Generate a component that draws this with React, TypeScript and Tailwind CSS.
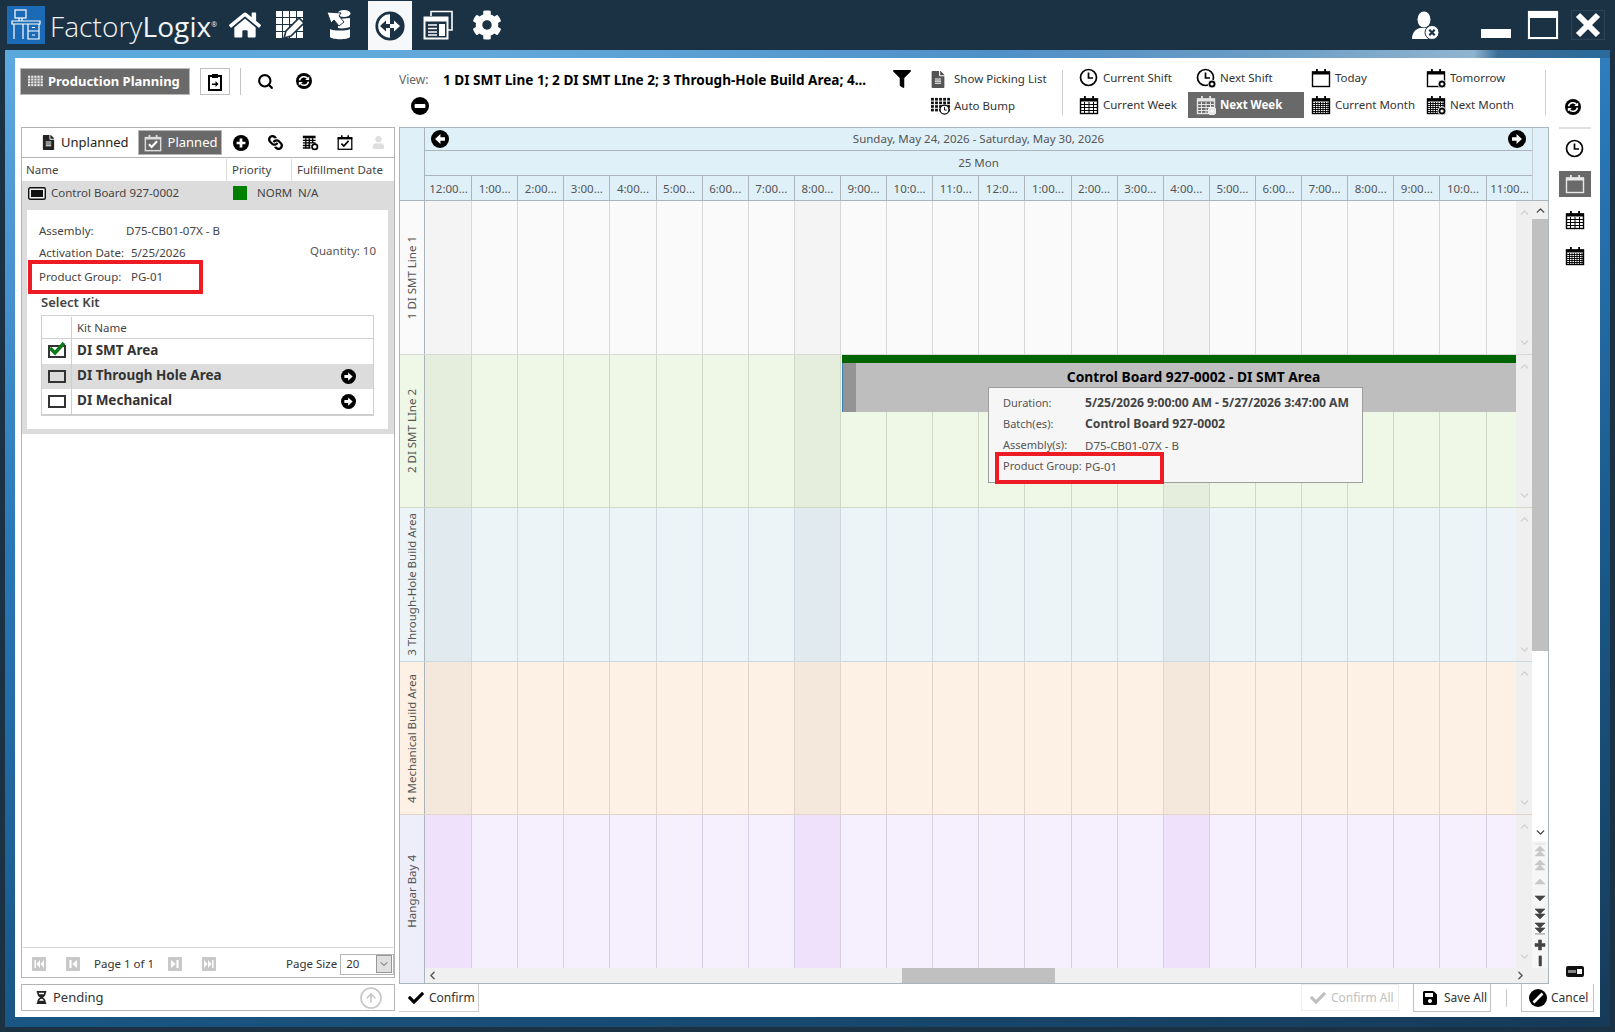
import React from 'react';
import { FaHome, FaCog, FaFilter, FaLink, FaUser, FaFileAlt, FaCheck, FaSave, FaHourglassHalf } from 'react-icons/fa';
import { ArrowUpCircle, ChevronDown, ChevronLeft, ChevronRight, ChevronUp, Search } from 'lucide-react';

const hours = ['12:00...', '1:00...', '2:00...', '3:00...', '4:00...', '5:00...', '6:00...', '7:00...', '8:00...', '9:00...', '10:0...', '11:0...', '12:0...', '1:00...', '2:00...', '3:00...', '4:00...', '5:00...', '6:00...', '7:00...', '8:00...', '9:00...', '10:0...', '11:00...'];

const lanes = [
  { name: '1 DI SMT Line 1', label: 'bg-[#fafafa]', cell: 'bg-[#fafafa]', shade: 'bg-[#f4f4f4]', line: 'border-[#d8d8d8]' },
  { name: '2 DI SMT LIne 2', label: 'bg-[#eff8e6]', cell: 'bg-[#eff8e6]', shade: 'bg-[#e5eedc]', line: 'border-[#cfd9c6]' },
  { name: '3 Through-Hole Build Area', label: 'bg-[#ecf4f8]', cell: 'bg-[#ecf4f8]', shade: 'bg-[#e1eaee]', line: 'border-[#cdd8df]' },
  { name: '4 Mechanical Build Area', label: 'bg-[#fdf0e4]', cell: 'bg-[#fdf0e4]', shade: 'bg-[#f4e7db]', line: 'border-[#e2d5c8]' },
  { name: 'Hangar Bay 4', label: 'bg-[#eeeefa]', cell: 'bg-[#f6f0fe]', shade: 'bg-[#efe1fb]', line: 'border-[#d8cfe4]' },
];

const CircleArrow = ({ dir, size = 18 }: { dir: 'left' | 'right'; size?: number }) => (
  <svg width={size} height={size} viewBox="0 0 20 20">
    <circle cx="10" cy="10" r="10" fill="#000" />
    {dir === 'right' ? (
      <polygon points="4.5,8 9.5,8 9.5,4.5 15.5,10 9.5,15.5 9.5,12 4.5,12" fill="#fff" />
    ) : (
      <polygon points="15.5,8 10.5,8 10.5,4.5 4.5,10 10.5,15.5 10.5,12 15.5,12" fill="#fff" />
    )}
  </svg>
);

const CirclePlus = () => (
  <svg width="16" height="16" viewBox="0 0 20 20">
    <circle cx="10" cy="10" r="10" fill="#000" />
    <path d="M10 4.5v11M4.5 10h11" stroke="#fff" strokeWidth="3.4" />
  </svg>
);

const CircleMinus = () => (
  <svg width="18" height="18" viewBox="0 0 20 20">
    <circle cx="10" cy="10" r="10" fill="#000" />
    <rect x="4" y="7.8" width="12" height="4.4" rx="1" fill="#fff" />
  </svg>
);

const Refresh = () => (
  <svg width="16" height="16" viewBox="0 0 20 20">
    <circle cx="10" cy="10" r="10" fill="#000" />
    <path d="M4.4 9.2A5.7 5.7 0 0 1 14.6 7" stroke="#fff" strokeWidth="2" fill="none" />
    <path d="M15.6 10.8A5.7 5.7 0 0 1 5.4 13" stroke="#fff" strokeWidth="2" fill="none" />
    <polygon points="11.5,8.8 16.5,8.8 16.5,4.5" fill="#fff" />
    <polygon points="8.5,11.2 3.5,11.2 3.5,15.5" fill="#fff" />
  </svg>
);

const Badge = ({ color = '#000' }: { color?: string }) => (
  <>
    <circle cx="16" cy="16" r="4" fill={color} stroke="#fff" strokeWidth="0.8" />
    <circle cx="16" cy="16" r="1.6" fill="#fff" />
  </>
);

const ClockIcon = ({ badge }: { badge?: boolean }) => (
  <svg width="20" height="20" viewBox="0 0 20 20" className="text-black">
    <circle cx="9.5" cy="9.5" r="8" stroke="currentColor" strokeWidth="1.7" fill="none" />
    <path d="M9.5 4.5v5.5h4.5" stroke="currentColor" strokeWidth="1.7" fill="none" />
    {badge && <Badge />}
  </svg>
);

const CalIcon = ({ grid, dense, badge, className }: { grid?: boolean; dense?: boolean; badge?: boolean; className?: string }) => (
  <svg width="20" height="20" viewBox="0 0 20 20" className={className ?? 'text-black'}>
    <rect x="1.5" y="4" width="17" height="14.5" stroke="currentColor" strokeWidth="1.4" fill="none" />
    <rect x="1" y="3.5" width="18" height="3" fill="currentColor" />
    <rect x="5" y="1" width="1.8" height="4" fill="currentColor" />
    <rect x="13.2" y="1" width="1.8" height="4" fill="currentColor" />
    {grid && <path d="M2 9.5h16M2 12.5h16M2 15.5h16M5.5 7v11M10 7v11M14.5 7v11" stroke="currentColor" strokeWidth="1" />}
    {dense && <path d="M2 8.5h16M2 10.5h16M2 12.5h16M2 14.5h16M2 16.5h16M4.5 7v11M7 7v11M9.5 7v11M12 7v11M14.5 7v11M17 7v11" stroke="currentColor" strokeWidth="0.9" />}
    {badge && <Badge color="currentColor" />}
  </svg>
);

const CalCheck = () => (
  <svg width="16" height="17" viewBox="0 0 20 20">
    <rect x="1.5" y="4" width="17" height="14.5" stroke="#000" strokeWidth="1.6" fill="none" />
    <rect x="1" y="3.5" width="18" height="2.6" fill="#000" />
    <rect x="5" y="1" width="2" height="4" fill="#000" />
    <rect x="13" y="1" width="2" height="4" fill="#000" />
    <path d="M5.5 11.5l3 3 6-6.5" stroke="#000" strokeWidth="2.2" fill="none" />
  </svg>
);

const CalCheckWhite = () => (
  <svg width="18" height="18" viewBox="0 0 20 20">
    <rect x="1.5" y="4" width="17" height="14.5" stroke="#ddd" strokeWidth="1.6" fill="none" />
    <rect x="1" y="3.5" width="18" height="2.6" fill="#ddd" />
    <rect x="5" y="1" width="2" height="4" fill="#ddd" />
    <rect x="13" y="1" width="2" height="4" fill="#ddd" />
    <path d="M5.5 11.5l3 3 6-6.5" stroke="#fff" strokeWidth="2.4" fill="none" />
  </svg>
);

const TableGear = () => (
  <svg width="17" height="17" viewBox="0 0 20 20">
    <rect x="1" y="2" width="15" height="3" fill="#000" />
    <path d="M1 7.5h15M1 10.5h15M1 13.5h9M1 16.5h9M4.5 5v12M8.5 5v12M12.5 5v5" stroke="#000" strokeWidth="1.6" />
    <circle cx="15" cy="15" r="3.2" fill="none" stroke="#000" strokeWidth="2" />
  </svg>
);

const GridSmall = ({ color, badge, width = 20 }: { color: string; badge?: boolean; width?: number }) => (
  <svg width={width} height={Math.round(width * 0.9)} viewBox="0 0 22 20">
    {[1, 5, 9, 13].map((y) =>
      [1, 5.5, 10, 14.5, 19].map((x) => <rect key={`${x}-${y}`} x={x} y={y} width="3.2" height="3" fill={color} />)
    )}
    {badge && (
      <>
        <circle cx="16" cy="14" r="5" fill="#fff" stroke="#000" strokeWidth="1.3" />
        <path d="M16 11v3.5h2.5" stroke="#000" strokeWidth="1" fill="none" />
      </>
    )}
  </svg>
);

const PagerIcon = ({ kind }: { kind: 'first' | 'prev' | 'next' | 'last' }) => (
  <svg width="14" height="14" viewBox="0 0 14 14" className="rounded-[1px] bg-[#c8c8c8]">
    {kind === 'first' && <path d="M2.5 3h1.4v8H2.5zM8 3v8L4.5 7zM12 3v8L8.5 7z" fill="#fff" />}
    {kind === 'prev' && <path d="M3.5 3h2v8h-2zM11 3v8L6.5 7z" fill="#fff" />}
    {kind === 'next' && <path d="M8.5 3h2v8h-2zM3 3v8l4.5-4z" fill="#fff" />}
    {kind === 'last' && <path d="M10.1 3h1.4v8h-1.4zM2 3v8l3.5-4zM6 3v8l3.5-4z" fill="#fff" />}
  </svg>
);

const Logo = () => (
  <div className="flex h-[38px] w-[38px] items-center justify-center bg-[#1b6ab5]">
    <svg width="30" height="32" viewBox="0 0 30 32" fill="none" stroke="#fff" strokeWidth="1.2">
      <rect x="4" y="1" width="11" height="8" />
      <path d="M8 9v3M11 9v3M1 12h28v3H1zM3 15v15M12 15v15M17 15v15h11V15M17 22h11" />
      <path d="M21 18.5h3M21 26h3" />
    </svg>
  </div>
);

const GridEdit = () => (
  <svg width="30" height="30" viewBox="0 0 30 30">
    {[1, 8, 15, 22].map((y) =>
      [1, 8, 15, 22].map((x) => <rect key={`${x}-${y}`} x={x} y={y} width="6" height="6" fill="#fff" />)
    )}
    <path d="M9 28l2-7L24 8l5 5-13 13z" fill="#fff" stroke="#1b3245" strokeWidth="1.6" />
  </svg>
);

const DbIcon = () => (
  <svg width="26" height="32" viewBox="0 0 26 32">
    <path d="M3 20c3 2 17 2 20 0v8c-2 3-18 3-20 0z" fill="#fff" />
    <path d="M11 10l12-1v9c-3 1-8 2-12 1z" fill="#fff" />
    <ellipse cx="17" cy="4.5" rx="6.5" ry="3.5" fill="#fff" />
    <path d="M0 3l14 1-2 3 5 6-5 4-5-6-3 3z" fill="#fff" stroke="#1b3245" strokeWidth="1" />
  </svg>
);

const SwitchIcon = () => (
  <svg width="30" height="30" viewBox="0 0 30 30">
    <circle cx="15" cy="15" r="13.2" fill="#fff" stroke="#1b3245" strokeWidth="2.8" />
    <path d="M15 2a13 13 0 0 1 0 26z" fill="#1b3245" />
    <polygon points="5,15 11,9.5 11,13 15,13 15,17 11,17 11,20.5" fill="#1b3245" />
    <polygon points="25,15 19,9.5 19,13 15,13 15,17 19,17 19,20.5" fill="#fff" />
  </svg>
);

const WindowsIcon = () => (
  <svg width="30" height="30" viewBox="0 0 30 30" fill="none" stroke="#fff">
    <path d="M8 6V1.5h21V20h-4" strokeWidth="1.6" />
    <rect x="1.5" y="7.5" width="23" height="21" strokeWidth="2" />
    <rect x="2" y="8" width="22" height="3.5" fill="#fff" stroke="none" />
    <path d="M5 15h9M5 18.5h9M5 22h9M5 25h9" strokeWidth="1.7" />
    <rect x="16" y="14" width="6" height="12" fill="#fff" stroke="none" />
  </svg>
);

const UserOff = () => (
  <svg width="28" height="29" viewBox="0 0 28 29">
    <ellipse cx="12" cy="8.5" rx="6.5" ry="8" fill="#fff" />
    <path d="M0 28c0-7 4-10 8-11h8c4 1 8 4 8 11z" fill="#fff" />
    <circle cx="20" cy="21.5" r="7" fill="#fff" stroke="#1b3245" strokeWidth="1" />
    <path d="M17.3 18.8l5.4 5.4M22.7 18.8l-5.4 5.4" stroke="#1b3245" strokeWidth="2.2" />
  </svg>
);

const TimeButton = ({ icon, label, active, w, pad = 'pl-[10px]' }: { icon: React.ReactNode; label: string; active?: boolean; w: string; pad?: string }) => (
  <div className={`flex h-[26px] items-center gap-[4px] text-[11.5px] ${pad} ${w} ${active ? 'bg-[#696969] font-bold text-white' : 'text-[#333]'}`}>
    <span className="flex w-[20px] shrink-0 justify-center">{icon}</span>
    <span className="whitespace-nowrap">{label}</span>
  </div>
);

const Toolbar = () => (
  <div className="flex h-[69px] shrink-0">
    <div className="flex w-[384px] shrink-0 items-start pl-[5px] pt-[10px]">
      <div className="flex h-[27px] w-[170px] items-center gap-[5px] border border-[#b8b8b8] bg-[#6a6a6a] pl-[6px] text-[13px] font-bold text-white">
        <GridSmall color="#e8e8e8" width={16} />
        <span className="whitespace-nowrap">Production Planning</span>
      </div>
      <div className="ml-[10px] flex h-[27px] w-[30px] items-center justify-center border border-[#c0c0c0]">
        <svg width="14" height="18" viewBox="0 0 14 18">
          <path d="M1 3h12v14H1z" fill="#fff" stroke="#000" strokeWidth="2" />
          <rect x="4" y="1" width="6" height="4" fill="#000" />
          <path d="M4 10.5h3.5V8l3 3-3 3v-2H4z" fill="#000" />
        </svg>
      </div>
      <div className="ml-[10px] h-[27px] w-px bg-[#c4c4c4]" />
      <Search size={17} strokeWidth={3} className="ml-[16px] mt-[5px] text-black" />
      <div className="ml-[22px] mt-[5px]">
        <Refresh />
      </div>
    </div>
    <div className="relative my-[12px] flex w-[664px] shrink-0 border-r border-[#cfcfcf]">
      <div className="w-[500px] shrink-0">
        <div className="flex h-[20px] items-center">
          <span className="w-[44px] text-[12px] text-[#666]">View:</span>
          <span className="whitespace-nowrap text-[13.6px] font-bold text-black">1 DI SMT Line 1; 2 DI SMT LIne 2; 3 Through-Hole Build Area; 4...</span>
        </div>
        <div className="ml-[12px] mt-[7px]">
          <CircleMinus />
        </div>
      </div>
      <div className="-mt-[1px] ml-[-6px] w-[28px] pt-[1px]">
        <FaFilter size={18} className="text-black" />
      </div>
      <div className="ml-[9px] flex flex-col gap-[8px] text-[11.5px] text-[#333]">
        <div className="flex h-[20px] items-center gap-[8px]">
          <FaFileAlt size={17} className="w-[16px] text-[#555]" />
          <span className="whitespace-nowrap">Show Picking List</span>
        </div>
        <div className="mt-px flex h-[20px] items-center gap-[4px]">
          <GridSmall color="#111" badge />
          <span className="whitespace-nowrap">Auto Bump</span>
        </div>
      </div>
    </div>
    <div className="ml-[6px] mt-[7px] grid h-[53px] w-[470px] shrink-0 grid-cols-[119px_116px_112px_123px] grid-rows-2">
      <TimeButton w="w-[119px]" icon={<ClockIcon />} label="Current Shift" />
      <TimeButton w="w-[116px]" pad="pl-[8px]" icon={<ClockIcon badge />} label="Next Shift" />
      <TimeButton w="w-[112px]" pad="pl-[7px]" icon={<CalIcon />} label="Today" />
      <TimeButton w="w-[123px]" icon={<CalIcon badge />} label="Tomorrow" />
      <TimeButton w="w-[119px]" icon={<CalIcon grid />} label="Current Week" />
      <TimeButton w="w-[116px]" pad="pl-[8px]" active icon={<CalIcon grid badge className="text-[#e4e4e4]" />} label="Next Week" />
      <TimeButton w="w-[112px]" pad="pl-[7px]" icon={<CalIcon dense />} label="Current Month" />
      <TimeButton w="w-[123px]" icon={<CalIcon dense badge />} label="Next Month" />
    </div>
    <div className="my-[12px] ml-[6px] w-px bg-[#d0d0d0]" />
    <div className="flex flex-1 justify-center pt-[41px]">
      <Refresh />
    </div>
  </div>
);

const LeftPanel = () => (
  <div className="flex h-[851px] w-[374px] shrink-0 flex-col border border-[#b5b5b5] text-[#444]">
    <div className="flex h-[30px] shrink-0 items-center border-b border-[#b5b5b5]">
      <FaFileAlt size={15} className="ml-[19px] text-[#222]" />
      <span className="ml-[5px] text-[13px] text-[#222]">Unplanned</span>
      <div className="ml-[9px] flex h-[25px] w-[84px] items-center gap-[6px] border border-[#b5b5b5] bg-[#696969] pl-[5px] text-[13px] text-white">
        <CalCheckWhite />
        <span>Planned</span>
      </div>
      <div className="ml-[11px]"><CirclePlus /></div>
      <FaLink size={15} className="ml-[19px] rotate-90 text-black" />
      <div className="ml-[19px]"><TableGear /></div>
      <div className="ml-[18px]"><CalCheck /></div>
      <FaUser size={13} className="ml-[19px] text-[#dedede]" />
    </div>
    <div className="flex min-h-0 flex-1 flex-col">
      <div className="flex h-[23px] shrink-0 items-center pt-px text-[11.5px]">
        <div className="flex h-full w-[205px] items-center border-r border-[#dcdcdc] pl-[4px]">Name</div>
        <div className="flex h-full w-[65px] items-center border-r border-[#dcdcdc] pl-[5px]">Priority</div>
        <div className="pl-[5px]">Fulfillment Date</div>
      </div>
      <div className="flex h-[24px] shrink-0 items-center bg-[#dcdcdc] text-[11.5px]">
        <svg width="18" height="13" viewBox="0 0 18 13" className="ml-[6px]">
          <rect x="0.7" y="0.7" width="16.6" height="11.6" rx="1.5" fill="#f4f4f4" stroke="#111" strokeWidth="1.4" />
          <rect x="3" y="3" width="12" height="7" fill="#111" />
        </svg>
        <span className="ml-[5px] w-[176px]">Control Board 927-0002</span>
        <div className="flex h-full w-[65px] items-center overflow-hidden pl-[6px]">
          <span className="h-[14px] w-[14px] shrink-0 bg-[#008000]" />
          <span className="ml-[10px] whitespace-nowrap">NORMAL</span>
        </div>
        <span className="pl-[6px]">N/A</span>
      </div>
      <div className="h-[229px] shrink-0 bg-[#dcdcdc] px-[5px] py-[5px]">
        <div className="relative h-[219px] w-[361px] bg-white pl-[12px] pt-[10px] text-[11.5px]">
          <div className="flex h-[21px] items-center">
            <span className="w-[87px]">Assembly:</span>
            <span>D75-CB01-07X - B</span>
          </div>
          <div className="flex h-[22px] items-center pt-px">
            <span className="w-[92px] whitespace-nowrap">Activation Date:</span>
            <span>5/25/2026</span>
            <span className="absolute right-[12px] top-[32px] text-[#555]">Quantity: 10</span>
          </div>
          <div className="relative mt-[3px] flex h-[22px] items-center">
            <span className="w-[92px] whitespace-nowrap">Product Group:</span>
            <span>PG-01</span>
            <div className="absolute left-[-11px] top-[-6px] h-[34px] w-[175px] border-4 border-[#ed1c24]" />
          </div>
          <div className="ml-[2px] mt-[5px] flex h-[18px] items-center pt-px text-[13px] font-semibold text-[#444]">Select Kit</div>
          <div className="ml-[2px] mt-[4px] w-[333px] border-x border-b-2 border-t border-[#cfcfcf]">
            <div className="flex h-[23px] items-center border-b border-[#cfcfcf] pt-px">
              <div className="h-full w-[30px] border-r border-[#cfcfcf]" />
              <span className="pl-[5px]">Kit Name</span>
            </div>
            {[
              { name: 'DI SMT Area', checked: true, grey: false },
              { name: 'DI Through Hole Area', checked: false, grey: true },
              { name: 'DI Mechanical', checked: false, grey: false },
            ].map((kit) => (
              <div key={kit.name} className={`flex h-[25px] items-center ${kit.grey ? 'bg-[#dcdcdc]' : ''}`}>
                <div className="relative flex h-full w-[30px] items-center justify-center border-r border-[#cfcfcf]">
                  <span className="h-[13px] w-[18px] border-2 border-[#333]" />
                  {kit.checked && (
                    <svg width="20" height="16" viewBox="0 0 20 16" className="absolute left-[5px] top-[2px]">
                      <path d="M3 7l5 5 9-10" fill="none" stroke="#0b7a1a" strokeWidth="3.6" />
                    </svg>
                  )}
                </div>
                <span className="mb-[2px] ml-[5px] flex-1 text-[13.5px] font-bold text-[#333]">{kit.name}</span>
                {kit.name !== 'DI SMT Area' && (
                  <div className="mr-[17px]"><CircleArrow dir="right" size={15} /></div>
                )}
              </div>
            ))}
          </div>
        </div>
      </div>
      <div className="flex-1" />
      <div className="mx-px h-px bg-[#d4d4d4]" />
    </div>
    <div className="flex h-[29px] shrink-0 items-center pt-[3px] text-[#333]">
      <div className="ml-[10px]"><PagerIcon kind="first" /></div>
      <div className="ml-[20px]"><PagerIcon kind="prev" /></div>
      <span className="ml-[14px] w-[60px] whitespace-nowrap text-[11.5px]">Page 1 of 1</span>
      <div className="ml-[14px]"><PagerIcon kind="next" /></div>
      <div className="ml-[20px]"><PagerIcon kind="last" /></div>
      <span className="ml-[70px] whitespace-nowrap text-[11.5px]">Page Size</span>
      <div className="ml-[3px] flex h-[21px] w-[54px] items-center border border-[#b5b5b5] pl-[5px] text-[11.5px]">
        <span className="flex-1">20</span>
        <div className="mr-px flex h-[18px] w-[16px] items-center justify-center border border-[#999] bg-[#e0e0e0]">
          <ChevronDown size={12} strokeWidth={2} className="text-[#555]" />
        </div>
      </div>
    </div>
  </div>
);

const GridHeader = () => (
  <div className="flex h-[73px] shrink-0 border-b border-[#aab4ba] bg-[#dff0f9] text-[#555]">
    <div className="w-[25px] shrink-0 border-r border-[#aab4ba]" />
    <div className="w-[1108px] shrink-0 border-r border-[#c4ced4]">
      <div className="relative flex h-[23px] items-center justify-center border-b border-[#aab4ba] text-[11.5px]">
        <div className="absolute left-[6px] top-[2px]"><CircleArrow dir="left" /></div>
        <span>Sunday, May 24, 2026 - Saturday, May 30, 2026</span>
        <div className="absolute right-[6px] top-[2px]"><CircleArrow dir="right" /></div>
      </div>
      <div className="flex h-[25px] items-center justify-center border-b border-[#aab4ba] text-[11.5px]">25 Mon</div>
      <div className="flex h-[24px] pl-px">
        {hours.map((h, i) => (
          <div key={i} className="flex h-full w-[46.12px] shrink-0 items-center justify-center border-r border-[#aab4ba] pt-px text-[11.5px] last:border-r-0">
            {h}
          </div>
        ))}
      </div>
    </div>
  </div>
);

const Lane = ({ lane, children }: { lane: (typeof lanes)[number]; children?: React.ReactNode }) => (
  <div className={`flex h-[153.6px] shrink-0 border-b ${lane.line}`}>
    <div className={`flex w-[25px] shrink-0 items-center justify-center border-r border-[#aab4ba] ${lane.label}`}>
      <span className="rotate-180 whitespace-nowrap text-[11.5px] text-[#555] [writing-mode:vertical-rl]">{lane.name}</span>
    </div>
    <div className={`relative flex w-[1091px] shrink-0 overflow-hidden pl-px ${lane.shade}`}>
      {hours.map((_, i) => (
        <div key={i} className={`h-full w-[46.12px] shrink-0 border-r ${lane.line} ${i % 8 === 0 ? lane.shade : lane.cell}`} />
      ))}
      {children}
    </div>
    <div className="flex w-[16px] shrink-0 flex-col items-center justify-between bg-[#efefef] py-[5px] text-[#cfcfcf]">
      <ChevronUp size={13} strokeWidth={2.4} />
      <ChevronDown size={13} strokeWidth={2.4} />
    </div>
  </div>
);

const ZoomControls = () => (
  <div className="flex h-[128px] w-full shrink-0 flex-col items-center bg-[#f6f6f6] pt-[1px]">
    {[
      { d: 'M2 1h10M7 3L2 8h10zM7 8l-5 5h10z', c: '#c8c8c8' },
      { d: 'M7 1L2 6h10zM7 6l-5 5h10z', c: '#c8c8c8' },
      { d: 'M7 4L2 9h10z', c: '#c8c8c8' },
      { d: 'M2 5h10L7 10z', c: '#444' },
      { d: 'M2 2h10L7 7zM2 7h10L7 12z', c: '#444' },
      { d: 'M2 1h10L7 6zM2 6h10l-5 5zM2 12h10', c: '#444' },
      { d: 'M5.5 2h3v3.5H12v3H8.5V12h-3V8.5H2v-3h3.5z', c: '#444' },
      { d: 'M6 2h2.5v10H6z', c: '#444' },
    ].map((item, i) => (
      <svg key={i} width="14" height="16" viewBox="0 0 14 14">
        <path d={item.d} fill={item.c} stroke={item.c} strokeWidth="0.6" />
      </svg>
    ))}
  </div>
);

const GanttBar = () => (
  <div className="absolute left-[417px] top-0 h-[58px] w-[700px]">
    <div className="h-[8px] bg-[#006400]" />
    <div className="flex h-[49px] bg-[#bebebe]">
      <div className="h-full w-[14px] border-l border-[#3a7fb5] bg-[#949494]" />
      <div className="w-[675px] pt-[4px] text-center text-[13.8px] font-bold text-black">Control Board 927-0002 - DI SMT Area</div>
    </div>
  </div>
);

const GridArea = () => (
  <div className="relative flex h-[857px] w-[1150px] shrink-0 flex-col border-x border-t border-[#aab4ba]">
    <GridHeader />
    <div className="flex min-h-0 flex-1">
      <div className="flex w-[1132px] shrink-0 flex-col">
        <Lane lane={lanes[0]} />
        <Lane lane={lanes[1]}><GanttBar /></Lane>
        <Lane lane={lanes[2]} />
        <Lane lane={lanes[3]} />
        <Lane lane={lanes[4]} />
      </div>
      <div className="flex h-[768px] w-[16px] shrink-0 flex-col items-center">
        <div className="flex h-[18px] w-full items-center justify-center bg-[#f0f0f0] text-[#444]">
          <ChevronUp size={13} strokeWidth={2.6} />
        </div>
        <div className="h-[432px] w-full shrink-0 bg-[#c0c0c0]" />
        <div className="flex flex-1 flex-col items-center justify-end bg-white pb-[2px] text-[#444]">
          <ChevronDown size={13} strokeWidth={2.6} />
        </div>
        <ZoomControls />
      </div>
    </div>
    <div className="flex h-[16px] shrink-0 border-b border-[#aab4ba]">
      <div className="w-[25px] shrink-0 border-r border-[#aab4ba] bg-[#eeeefa]" />
      <div className="relative flex flex-1 items-center justify-between bg-[#f0f0f0] px-[1px] text-[#555]">
        <ChevronLeft size={13} strokeWidth={2.6} />
        <div className="absolute left-[477px] top-0 h-full w-[153px] bg-[#c0c0c0]" />
        <ChevronRight size={13} strokeWidth={2.6} className="mr-[20px]" />
      </div>
    </div>
    <div className="absolute left-[588px] top-[259px] h-[96px] w-[375px] border border-[#9d9d9d] bg-[#f6f6f6] pl-[14px] pt-[5px] text-[11px] text-[#555]">
      <div className="flex h-[21px] items-center">
        <span className="w-[82px]">Duration:</span>
        <span className="whitespace-nowrap text-[12.2px] font-bold text-[#444]">5/25/2026 9:00:00 AM - 5/27/2026 3:47:00 AM</span>
      </div>
      <div className="flex h-[21px] items-center">
        <span className="w-[82px]">Batch(es):</span>
        <span className="text-[12.2px] font-bold text-[#444]">Control Board 927-0002</span>
      </div>
      <div className="flex h-[21px] items-center">
        <span className="w-[82px]">Assembly(s):</span>
        <span className="text-[11.5px]">D75-CB01-07X - B</span>
      </div>
      <div className="flex h-[21px] items-center">
        <span className="w-[82px] whitespace-nowrap">Product Group:</span>
        <span className="text-[11.5px]">PG-01</span>
      </div>
    </div>
    <div className="absolute left-[595px] top-[324px] h-[32px] w-[169px] border-4 border-[#ed1c24]" />
  </div>
);

const Sidebar = () => (
  <div className="flex h-[857px] w-[51px] shrink-0 flex-col items-center">
    <div className="h-[2px] w-[32px] bg-[#e0e0e0]" />
    <div className="mt-[10px] flex h-[20px] items-center justify-center"><ClockIcon /></div>
    <div className="mt-[12px] flex h-[26px] w-[32px] items-center justify-center bg-[#696969]">
      <CalIcon className="text-[#e8e8e8]" />
    </div>
    <div className="mt-[13px]"><CalIcon grid /></div>
    <div className="mt-[16px]"><CalIcon dense /></div>
    <div className="mb-[7px] mt-auto">
      <svg width="18" height="11" viewBox="0 0 18 11">
        <rect width="18" height="11" rx="2" fill="#111" />
        <rect x="2" y="4" width="8" height="3" fill="#888" />
        <rect x="11" y="3" width="5" height="5" fill="#fff" />
      </svg>
    </div>
  </div>
);

const BottomBar = () => (
  <div className="flex h-[28px] shrink-0 pl-[6px] text-[12px] text-[#333]">
    <div className="flex h-[27px] w-[374px] shrink-0 items-center border border-[#b5b5b5]">
      <FaHourglassHalf size={13} className="ml-[13px] text-[#222]" />
      <span className="ml-[5px] text-[13px]">Pending</span>
      <ArrowUpCircle size={24} strokeWidth={1.6} className="ml-auto mr-[11px] text-[#c6c6c6]" />
    </div>
    <div className="ml-[4px] flex h-[28px] w-[80px] items-center gap-[5px] border-b border-r border-[#cfcfcf] pl-[9px]">
      <FaCheck size={16} className="text-black" />
      <span>Confirm</span>
    </div>
    <div className="ml-[822px] flex h-[27px] w-[98px] items-center gap-[5px] border border-[#eeeeee] pl-[8px] text-[#c0c0c0]">
      <FaCheck size={16} />
      <span className="whitespace-nowrap">Confirm All</span>
    </div>
    <div className="ml-[14px] flex h-[28px] w-[78px] items-center gap-[6px] border-x border-b border-[#c0c0c0] pl-[8px]">
      <FaSave size={16} className="text-black" />
      <span className="whitespace-nowrap">Save All</span>
    </div>
    <div className="ml-[15px] mt-[5px] h-[18px] w-px bg-[#c8c8c8]" />
    <div className="ml-[14px] flex h-[28px] w-[73px] items-center gap-[4px] border-x border-b border-[#c0c0c0] pl-[7px]">
      <svg width="18" height="18" viewBox="0 0 18 18">
        <circle cx="9" cy="9" r="9" fill="#000" />
        <path d="M4.5 13.5l9-9" stroke="#fff" strokeWidth="2.6" />
      </svg>
      <span>Cancel</span>
    </div>
  </div>
);

const App: React.FC = () => {
  return (
    <div className="flex h-[1032px] w-[1615px] flex-col overflow-hidden bg-[#1b3245] font-['Noto_Sans',sans-serif]">
      <div className="flex h-[50px] shrink-0 items-center pl-[7px] text-white">
        <Logo />
        <div className="ml-[5px] mt-[2px] flex w-[173px] shrink-0 items-baseline text-[28px] leading-none tracking-[0.1px] text-[#f2f4f6] font-['Open_Sans',sans-serif]">
          <span className="font-light">Factory</span>
          <span>Logix</span>
          <span className="-translate-y-[10px] text-[7px]">®</span>
        </div>
        <div className="flex w-[44px] shrink-0 justify-center"><FaHome size={32} /></div>
        <div className="ml-[1px] flex w-[44px] shrink-0 justify-center"><GridEdit /></div>
        <div className="ml-[6px] flex w-[44px] shrink-0 justify-center"><DbIcon /></div>
        <div className="ml-[6px] mt-[1px] flex h-[49px] w-[44px] shrink-0 items-center justify-center bg-[#f7f8fa]"><SwitchIcon /></div>
        <div className="ml-[4px] flex w-[44px] shrink-0 justify-center"><WindowsIcon /></div>
        <div className="ml-[5px] flex w-[44px] shrink-0 justify-center"><FaCog size={30} /></div>
        <div className="ml-auto flex items-center pr-[11px]">
          <UserOff />
          <div className="ml-[41px] mt-[16px] h-[9px] w-[30px] bg-white" />
          <div className="ml-[17px] h-[28px] w-[30px] border-2 border-t-[7px] border-white outline outline-[#2c4356]" />
          <div className="ml-[14px] flex h-[28px] w-[32px] items-center justify-center outline outline-[#2c4356]">
            <svg width="26" height="26" viewBox="0 0 26 26">
              <path d="M3 3l20 20M23 3L3 23" stroke="#fff" strokeWidth="6" />
            </svg>
          </div>
        </div>
      </div>
      <div className="mx-[5px] h-[977px] w-[1605px] shrink-0 px-[10px] pb-[10px] pt-[8px] [background:linear-gradient(90deg,#5aa8dc_0%,#62a9da_30%,#4f8fc8_62%,#6a9cc4_78%,#8fb4d0_91.5%,#3a6e98_93%,#2a6a9a_100%)_top/100%_8px_no-repeat,linear-gradient(165deg,#5eaae0_0%,#2a78b8_35%,#1a5a8a_65%,#163a58_100%)]">
        <div className="flex h-[959px] w-[1585px] flex-col bg-white">
          <Toolbar />
          <div className="flex h-[857px] shrink-0 items-start pl-[6px]">
            <LeftPanel />
            <div className="ml-[4px]"><GridArea /></div>
            <Sidebar />
          </div>
          <BottomBar />
        </div>
      </div>
    </div>
  );
};

export default App;
